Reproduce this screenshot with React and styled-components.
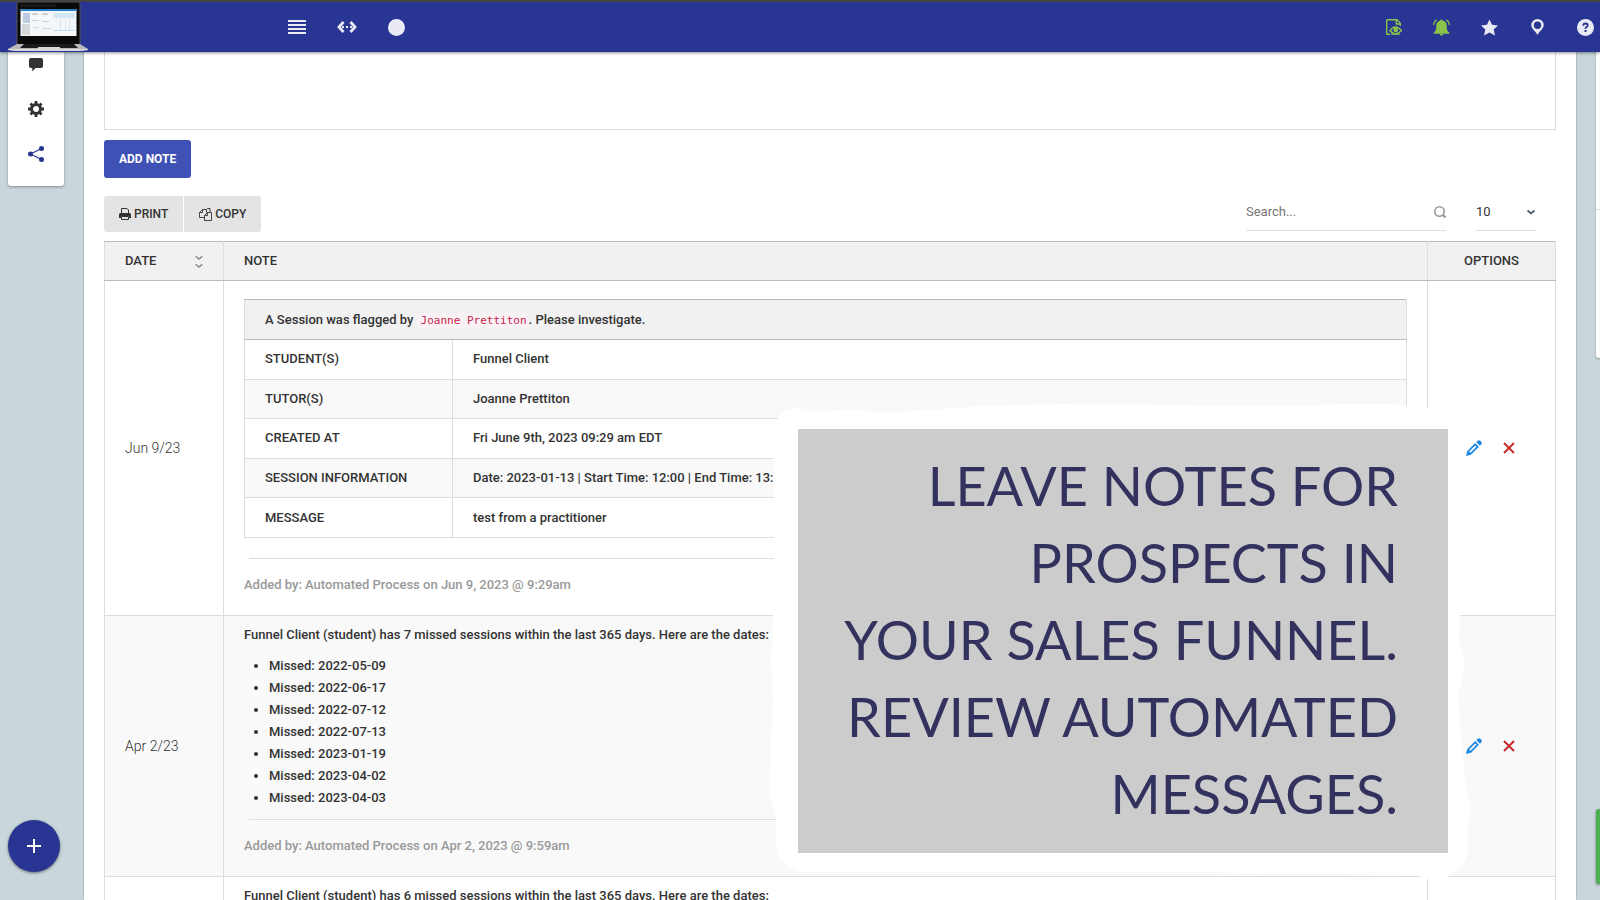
import React from "react";
import styled, { createGlobalStyle } from "styled-components";

const Global = createGlobalStyle`
  *, *::before, *::after { box-sizing: border-box; }
  body {
    margin: 0;
    background: #c9d7dc;
    color: #333;
    font: 400 13px/20px Roboto, "Liberation Sans", sans-serif;
  }
  button, input, select, textarea { font: inherit; color: inherit; }
  button { cursor: pointer; }
`;

const Page = styled.div`
  height: 100vh;
  overflow: hidden;
  display: flex;
  flex-direction: column;
`;

const Navbar = styled.header`
  position: relative;
  z-index: 2;
  flex: none;
  height: 52px;
  padding: 0 6px 0 8px;
  border-top: 2px solid #444;
  background: #283593;
  box-shadow: 0 1px 3px rgba(0, 0, 0, 0.45);
  display: flex;
  align-items: center;
  justify-content: space-between;
`;

const NavGroup = styled.div`
  display: flex;
  align-items: center;
  gap: 31px;
`;

const Brand = styled.a`
  display: block;
  width: 80px;
  height: 50px;
  margin-right: 169px;
`;

const IconButton = styled.button`
  display: flex;
  justify-content: center;
  padding: 0;
  border: 0;
  background: none;
  color: ${(p) => p.$color || "#e9eaf4"};
`;

const NavButton = styled(IconButton)`
  min-width: 17px;
`;

const Columns = styled.div`
  flex: 1;
  min-height: 0;
  display: flex;
  align-items: flex-start;
  gap: 20px;
  padding-left: 8px;
`;

const Rail = styled.nav`
  flex: none;
  width: 56px;
  height: 134px;
  padding-top: 4px;
  background: #fff;
  border-radius: 0 0 3px 3px;
  box-shadow: 0 1px 3px rgba(0, 0, 0, 0.35);
  display: flex;
  flex-direction: column;
  align-items: center;
  gap: 29px;
`;

const Panel = styled.main`
  flex: 1;
  min-width: 0;
  align-self: stretch;
  padding: 0 20px;
  background: #fff;
  box-shadow: 0 0 2px rgba(0, 0, 0, 0.35);
`;

const SidePanel = styled.aside`
  flex: none;
  width: 4px;
  height: 306px;
  padding-top: 157px;
  background: #fff;
  border-radius: 0 0 0 3px;
  box-shadow: 0 1px 2px rgba(0, 0, 0, 0.35);
`;

const SideRule = styled.hr`
  margin: 0;
  border: 0;
  border-top: 1px solid #ddd;
`;

const NoteField = styled.textarea`
  display: block;
  width: 100%;
  height: 78px;
  padding: 12px;
  border: 1px solid #ddd;
  border-top: 0;
  outline: 0;
  resize: none;
`;

const AddButton = styled.button`
  display: block;
  height: 38px;
  margin: 10px 0 15px;
  padding: 0 15px;
  border: 0;
  border-radius: 3px;
  background: #3f51b5;
  color: #fff;
  font-size: 12px;
  font-weight: 700;
`;

const Toolbar = styled.div`
  display: flex;
  align-items: flex-end;
  justify-content: space-between;
  margin-bottom: 9px;
`;

const Actions = styled.div`
  display: flex;
  gap: 1px;
`;

const ActionButton = styled.button`
  display: flex;
  align-items: center;
  gap: 3px;
  height: 36px;
  padding: 0 15px;
  border: 0;
  border-radius: ${(p) => (p.$last ? "0 3px 3px 0" : "3px 0 0 3px")};
  background: #e4e4e4;
  font-size: 12px;
  font-weight: 500;
`;

const Filters = styled.div`
  display: flex;
  gap: 30px;
  margin: 0 20px 1px 0;
`;

const Field = styled.label`
  display: flex;
  align-items: center;
  width: ${(p) => p.$width}px;
  height: 38px;
  border-bottom: 1px solid #ddd;
  color: #999;
`;

const SearchInput = styled.input`
  flex: 1;
  min-width: 0;
  padding: 0;
  border: 0;
  outline: 0;
  background: none;
  &::placeholder { color: #777; }
`;

const PageSize = styled.select`
  flex: 1;
  min-width: 0;
  padding: 0;
  border: 0;
  outline: 0;
  appearance: none;
  background: none;
  color: #333;
`;

const Table = styled.table`
  width: 100%;
  border-collapse: collapse;
  table-layout: fixed;
  text-align: left;
`;

const HeadCell = styled.th`
  width: ${(p) => (p.$width ? `${p.$width}px` : "auto")};
  height: 39px;
  padding: 0 20px;
  border: 1px solid #ddd;
  border-top-color: #bbb;
  border-bottom-color: #bbb;
  background: #f1f1f1;
  font-weight: 500;
  text-align: ${(p) => p.$align || "left"};
`;

const SortLabel = styled.div`
  display: flex;
  align-items: center;
  justify-content: space-between;
`;

const Row = styled.tr`
  background: ${(p) => (p.$shaded ? "#f9f9f9" : "#fff")};
`;

const Cell = styled.td`
  padding: 9px 20px 20px;
  border: 1px solid #ddd;
  vertical-align: top;
  font-weight: 500;
`;

const DateCell = styled(Cell)`
  padding: 0 20px;
  vertical-align: middle;
  font-size: 14px;
  font-weight: 300;
`;

const OptionsCell = styled(Cell)`
  padding: 0 3px 0 0;
  vertical-align: middle;
`;

const Options = styled.div`
  display: flex;
  align-items: center;
  justify-content: center;
  gap: 21px;
`;

const DetailTable = styled.table`
  width: 100%;
  height: 239px;
  margin-top: 9px;
  border-collapse: collapse;
  text-align: left;
`;

const DetailHead = styled.th`
  height: 40px;
  padding: 0 20px;
  border: 1px solid #ddd;
  border-top-color: #bbb;
  border-bottom-color: #bbb;
  background: #f1f1f1;
  font-weight: 500;
`;

const DetailName = styled.th`
  width: 208px;
  padding: 0 20px;
  border: 1px solid #ddd;
  font-weight: 500;
`;

const DetailValue = styled.td`
  padding: 0 20px;
  border: 1px solid #ddd;
`;

const Name = styled.code`
  padding: 1px 2px 1px 4px;
  border-radius: 3px;
  background: #f9f2f4;
  color: #c7254e;
  font: 400 11px/16px "DejaVu Sans Mono", monospace;
`;

const Message = styled.p`
  margin: 0;
`;

const Dates = styled.ul`
  margin: 10px 0 0;
  padding-left: 25px;
  line-height: 22px;
`;

const Divider = styled.hr`
  margin: ${(p) => p.$top}px 0 16px 5px;
  border: 0;
  border-top: 1px solid #ddd;
`;

const Byline = styled.p`
  margin: 0;
  color: #999;
`;

const Fab = styled.button`
  position: fixed;
  left: 8px;
  bottom: 28px;
  width: 52px;
  height: 52px;
  padding: 0;
  border: 0;
  border-radius: 50%;
  background: #283593;
  color: #fff;
  box-shadow: 0 1px 3px rgba(0, 0, 0, 0.5);
  display: flex;
  align-items: center;
  justify-content: center;
`;

const ChatTab = styled.button`
  position: fixed;
  right: 0;
  bottom: 16px;
  width: 4px;
  height: 75px;
  padding: 0;
  border: 0;
  border-radius: 3px 0 0 3px;
  background: #4caf50;
  box-shadow: 0 1px 3px rgba(0, 0, 0, 0.5);
`;

const Callout = styled.section`
  position: absolute;
  z-index: 3;
  top: 429px;
  right: 152px;
  width: 650px;
  height: 424px;
`;

const Brush = styled.svg`
  position: absolute;
  left: -28px;
  top: -29px;
`;

const CalloutText = styled.p`
  position: relative;
  height: 100%;
  margin: 0;
  padding: 18px 50px 0 0;
  background: #ccc;
  color: #33325e;
  font: 400 54px/77px Lato, sans-serif;
  text-align: right;
  white-space: nowrap;
`;

const Svg = ({ w = 16, h = w, box = `0 0 ${w} ${h}`, children }) => (
  <svg width={w} height={h} viewBox={box} fill="currentColor" aria-hidden="true">
    {children}
  </svg>
);

const Laptop = () => (
  <svg width="80" height="50" viewBox="0 0 80 50" aria-hidden="true">
    <path d="M11 0h59q2 0 2 2v41H9V2q0-2 2-2z" fill="#0a0a0a" stroke="#555" />
    <path d="M12 2h36v3H12z" fill="#181818" />
    <path d="M12.500 7h56v27h-56z" fill="#f4f7f9" />
    <path d="M12.500 7h56v2h-56z" fill="#2b7fc4" />
    <path d="M15 11h7v10h-7z" fill="#bccbe2" />
    <path d="M14 22h8v11h-8z" fill="#d5d8db" />
    <path d="M24 11h6v2h-6zM34 11h6v2h-6zM24 18h7v1h-7zM34 19h7v1h-7zM25 25h5v1h-5zM34 26h9v1h-9z" fill="#cfd3d6" />
    <path d="M46 11h21v5H46z" fill="#d2e7f4" />
    <path d="M52 17h1v12h-1zM61 17h1v12h-1zM57 17h1v12h-1z" fill="#dfe3e6" />
    <path d="M46 28h21v1H46z" fill="#bfe0f2" />
    <path d="M9 42h63l8 5v1H0v-1z" fill="#b9b9bb" />
    <path d="M16 42h50l4 4H12z" fill="#1b1b1d" />
    <path d="M30 45h22v3H30z" fill="#d8d8da" />
    <path d="M0 47h80v1q-4 1-10 1H10Q4 49 0 48z" fill="#d9d9dc" />
  </svg>
);

const MenuIcon = () => (
  <Svg w={18} h={16}><path d="M0 1h18v2H0zM0 5h18v2H0zM0 9h18v2H0zM0 13h18v2H0z" /></Svg>
);
const WidthIcon = () => (
  <Svg w={20} h={12}>
    <path d="M6.500 1L2 6l4.500 5M13.500 1L18 6l-4.500 5" fill="none" stroke="currentColor" strokeWidth="2.800" />
    <path d="M5 5h2v2H5zM9 5h2v2H9zM13 5h2v2h-2z" />
  </Svg>
);
const CircleIcon = () => <Svg w={17}><circle cx="8.500" cy="8.500" r="8.500" /></Svg>;
const FileEyeIcon = () => (
  <Svg>
    <path d="M4 15.300H1.500Q.7 15.300.7 14.500V1.500Q.7.7 1.500.7H11l3.300 3.500V7M10.300 1v4h4" fill="none" stroke="currentColor" strokeWidth="1.400" />
    <path d="M4 11.500q5-7 11.500 0-6 7-11.500 0z" fill="none" stroke="currentColor" strokeWidth="1.400" />
    <circle cx="9.700" cy="10.900" r="2.300" />
    <path d="M5 15.200h9" stroke="currentColor" />
  </Svg>
);
const BellIcon = () => (
  <Svg w={17}>
    <path d="M7.300 1.600a1.200 1.200 0 0 1 2.400 0c2.700.5 4 2.600 4 5.200 0 4 .6 5.200 2.600 7v1H.7v-1c2-1.800 2.600-3 2.600-7 0-2.600 1.300-4.700 4-5.200z" />
    <path d="M6.800 15h3.400a1.700 1.700 0 0 1-3.400 0z" />
    <path d="M3.700.7Q.8 2.300.7 6M13.300.7q2.900 1.600 3 5.300" fill="none" stroke="currentColor" strokeWidth="1.200" />
  </Svg>
);
const StarIcon = () => (
  <Svg w={17}><path d="M8.500.5l2.500 5.300 6 .7-4.300 3.900 1.300 6.100-5.500-3.100-5.500 3.100 1.300-6.100L0 6.500l6-.7z" /></Svg>
);
const PinIcon = () => (
  <Svg w={13} h={16}>
    <path fillRule="evenodd" d="M6.500 0A6.200 6.200 0 0 1 12.700 6.200C12.700 9.500 8.500 12 6.500 16 4.500 12 .3 9.500.3 6.200A6.200 6.200 0 0 1 6.500 0zm0 2.600a3.700 3.700 0 1 0 0 7.400 3.700 3.700 0 0 0 0-7.400z" />
  </Svg>
);
const HelpIcon = () => (
  <Svg w={17}>
    <circle cx="8.500" cy="8.500" r="8.500" />
    <path d="M6.300 6.700V6Q6.500 4.500 8.500 4.500T10.700 6.200Q10.700 7.300 9.500 8T8.500 9.800" fill="none" stroke="#283593" strokeWidth="1.800" />
    <path d="M7.500 11h2v2h-2z" fill="#283593" />
  </Svg>
);
const CommentIcon = () => (
  <Svg><path d="M3 2h10q2 0 2 2v6q0 2-2 2H7.500L4.300 15.500V12H3q-2 0-2-2V4q0-2 2-2z" /></Svg>
);
const GearIcon = () => (
  <Svg>
    <circle cx="8" cy="8" r="4.500" fill="none" stroke="currentColor" strokeWidth="3" />
    <path d="M8 0v4M8 12v4M0 8h4M12 8h4M2.500 2.500l2.400 2.400M11.100 11.100l2.400 2.400M2.500 13.500l2.400-2.400M11.100 4.900l2.400-2.400" stroke="currentColor" strokeWidth="2.800" />
  </Svg>
);
const ShareIcon = () => (
  <Svg>
    <path d="M13.500 2.500L2.500 8l11 5.500" fill="none" stroke="currentColor" strokeWidth="1.200" />
    <circle cx="13.500" cy="2.500" r="2.500" /><circle cx="2.500" cy="8" r="2.500" /><circle cx="13.500" cy="13.500" r="2.500" />
  </Svg>
);
const PrintIcon = () => (
  <Svg w={12} h={12}>
    <path d="M2.500 5.500v-5H8l1.500 1.500v3.500" fill="none" stroke="currentColor" />
    <path d="M1.500 5h9Q12 5 12 6.500V10h-2V8H2v2H0V6.500Q0 5 1.500 5z" />
    <path d="M2.500 8.500h7v3h-7z" fill="none" stroke="currentColor" />
  </Svg>
);
const CopyIcon = () => (
  <Svg w={13} h={13}>
    <path d="M5.500 9.500h-5v-5l3-3h4v3M3.500 1.500v3h-3M5.500 12.500v-5l3-3h4v8zM8.500 4.500v3h-3M7.500 1.500l1-1h2.500v4" fill="none" stroke="currentColor" strokeWidth="0.900" />
  </Svg>
);
const SearchIcon = () => (
  <Svg w={12}>
    <circle cx="5.500" cy="5.500" r="4.700" fill="none" stroke="currentColor" strokeWidth="1.600" />
    <path d="M8.500 8.500l3 3" stroke="currentColor" strokeWidth="2.200" />
  </Svg>
);
const ChevronIcon = () => (
  <Svg w={10} h={6}><path d="M1.500 1.500L5 4.500l3.500-3" fill="none" stroke="#455a64" strokeWidth="1.700" /></Svg>
);
const SortIcon = () => (
  <Svg w={8} h={13}><path d="M.7 1.200L4 4l3.300-2.800M.7 9.200L4 12l3.300-2.800" fill="none" stroke="#888" strokeWidth="1.500" /></Svg>
);
const PencilIcon = () => (
  <Svg>
    <path fillRule="evenodd" d="M0 16l1.300-5L9.200 3.100l3.700 3.700L5 14.700zM3.200 11.600l1.200 1.200 6.100-6-1.300-1.300z" />
    <path d="M10.200 2.100L11.600.8q1-1 2.200-.4Q15 1 15.600 2.200q.6 1.200-.4 2.200L13.900 5.800z" />
  </Svg>
);
const RemoveIcon = () => (
  <Svg w={12}><path d="M1 1l10 10M11 1L1 11" stroke="currentColor" strokeWidth="1.900" /></Svg>
);
const PlusIcon = () => <Svg><path d="M7 1h2v6h6v2H9v6H7V9H1V7h6z" /></Svg>;

const navLeft = [["Menu", MenuIcon], ["Toggle width", WidthIcon], ["Status", CircleIcon]];
const navRight = [
  ["Reviews", FileEyeIcon, "#8bc34a"],
  ["Notifications", BellIcon, "#8bc34a"],
  ["Favourites", StarIcon],
  ["Locations", PinIcon],
  ["Help", HelpIcon],
];

const details = [
  ["STUDENT(S)", "Funnel Client"],
  ["TUTOR(S)", "Joanne Prettiton"],
  ["CREATED AT", "Fri June 9th, 2023 09:29 am EDT"],
  ["SESSION INFORMATION", "Date: 2023-01-13 | Start Time: 12:00 | End Time: 13:"],
  ["MESSAGE", "test from a practitioner"],
];

const missed = ["2022-05-09", "2022-06-17", "2022-07-12", "2022-07-13", "2023-01-19", "2023-04-02", "2023-04-03"];

const RowOptions = () => (
  <OptionsCell>
    <Options>
      <IconButton $color="#1e88e5" aria-label="Edit"><PencilIcon /></IconButton>
      <IconButton $color="#c62828" aria-label="Delete"><RemoveIcon /></IconButton>
    </Options>
  </OptionsCell>
);

export default function App() {
  return (
    <Page>
      <Global />
      <Navbar>
        <NavGroup>
          <Brand href="#" aria-label="Home"><Laptop /></Brand>
          {navLeft.map(([label, Icon]) => (
            <NavButton key={label} aria-label={label}><Icon /></NavButton>
          ))}
        </NavGroup>
        <NavGroup>
          {navRight.map(([label, Icon, color]) => (
            <NavButton key={label} aria-label={label} $color={color}><Icon /></NavButton>
          ))}
        </NavGroup>
      </Navbar>

      <Columns>
        <Rail>
          <IconButton $color="#333" aria-label="Comments"><CommentIcon /></IconButton>
          <IconButton $color="#333" aria-label="Settings"><GearIcon /></IconButton>
          <IconButton $color="#283593" aria-label="Share"><ShareIcon /></IconButton>
        </Rail>

        <Panel>
          <NoteField aria-label="Note" />
          <AddButton>ADD NOTE</AddButton>
          <Toolbar>
            <Actions>
              <ActionButton><PrintIcon />PRINT</ActionButton>
              <ActionButton $last><CopyIcon />COPY</ActionButton>
            </Actions>
            <Filters>
              <Field $width={200}>
                <SearchInput type="text" placeholder="Search..." aria-label="Search" />
                <SearchIcon />
              </Field>
              <Field $width={60}>
                <PageSize aria-label="Rows per page" defaultValue="10">
                  <option>10</option>
                </PageSize>
                <ChevronIcon />
              </Field>
            </Filters>
          </Toolbar>

          <Table>
            <thead>
              <tr>
                <HeadCell $width={119}>
                  <SortLabel>DATE <SortIcon /></SortLabel>
                </HeadCell>
                <HeadCell>NOTE</HeadCell>
                <HeadCell $width={128} $align="center">OPTIONS</HeadCell>
              </tr>
            </thead>
            <tbody>
              <Row>
                <DateCell>Jun 9/23</DateCell>
                <Cell>
                  <DetailTable>
                    <thead>
                      <tr>
                        <DetailHead colSpan={2}>
                          A Session was flagged by <Name>Joanne Prettiton</Name>. Please investigate.
                        </DetailHead>
                      </tr>
                    </thead>
                    <tbody>
                      {details.map(([name, value], i) => (
                        <Row key={name} $shaded={i % 2 === 1}>
                          <DetailName scope="row">{name}</DetailName>
                          <DetailValue>{value}</DetailValue>
                        </Row>
                      ))}
                    </tbody>
                  </DetailTable>
                  <Divider $top={20} />
                  <Byline>Added by: Automated Process on Jun 9, 2023 @ 9:29am</Byline>
                </Cell>
                <RowOptions />
              </Row>
              <Row $shaded>
                <DateCell>Apr 2/23</DateCell>
                <Cell>
                  <Message>
                    Funnel Client (student) has 7 missed sessions within the last 365 days. Here are the dates:
                  </Message>
                  <Dates>
                    {missed.map((d) => <li key={d}>Missed: {d}</li>)}
                  </Dates>
                  <Divider $top={10} />
                  <Byline>Added by: Automated Process on Apr 2, 2023 @ 9:59am</Byline>
                </Cell>
                <RowOptions />
              </Row>
              <Row>
                <DateCell />
                <Cell>
                  <Message>
                    Funnel Client (student) has 6 missed sessions within the last 365 days. Here are the dates:
                  </Message>
                </Cell>
                <OptionsCell />
              </Row>
            </tbody>
          </Table>
        </Panel>

        <SidePanel><SideRule /></SidePanel>
      </Columns>

      <Callout>
        <Brush width="704" height="480" viewBox="770 400 704 480" aria-hidden="true">
          <path
            fill="#fff"
            d="M774 425L778 418Q784 409 797 408 806 408 811 412L855 410 888 413 940 409 985 406 1060 404 1170 405 1300 406 1340 404 1390 404 1407 406 1430 408 1450 412 1460 430V625L1458 640Q1470 662 1458 693L1461 740 1466 790Q1471 800 1470 810L1468 825V853Q1462 872 1446 877L1444 879H1426L1420 876 1300 874 1200 872H800Q776 862 776 845V815L770 795 771 740 773 700 771 660 773 620 774 560z"
          />
        </Brush>
        <CalloutText>
          LEAVE NOTES FOR<br />PROSPECTS IN<br />YOUR SALES FUNNEL.<br />REVIEW AUTOMATED<br />MESSAGES.
        </CalloutText>
      </Callout>

      <Fab aria-label="Add"><PlusIcon /></Fab>
      <ChatTab aria-label="Open chat" />
    </Page>
  );
}
